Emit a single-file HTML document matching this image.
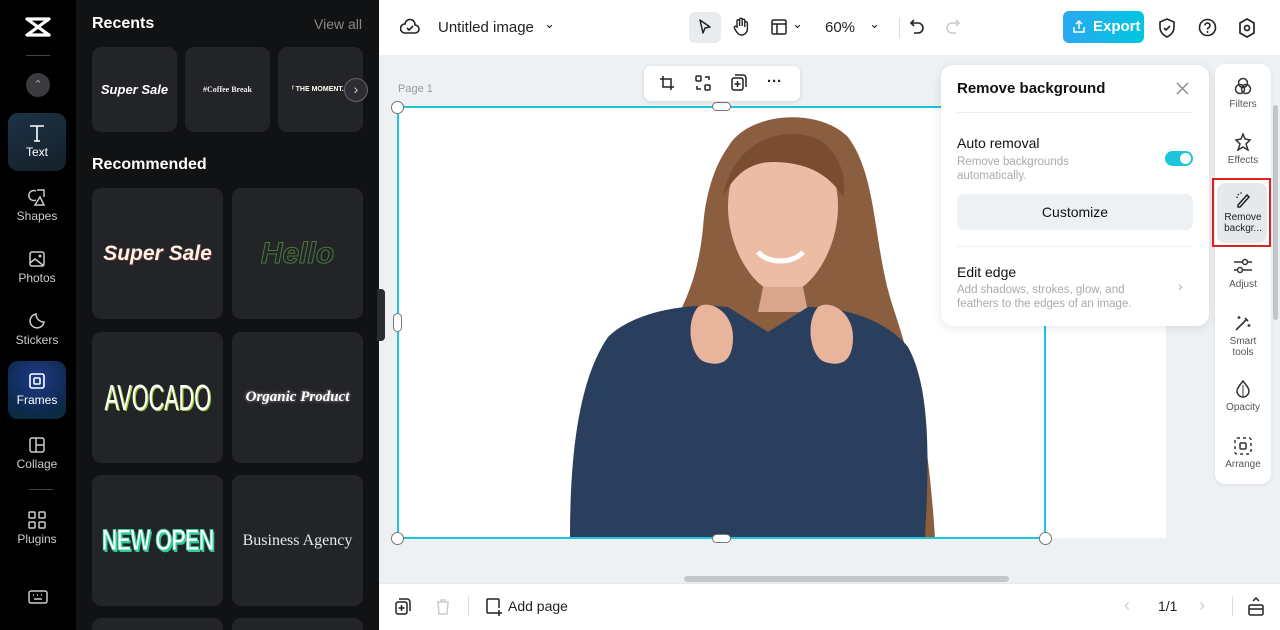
<!DOCTYPE html>
<html><head><meta charset="utf-8"><style>
*{box-sizing:border-box;margin:0;padding:0}
html,body{width:1280px;height:630px;overflow:hidden}
body{font-family:"Liberation Sans",sans-serif;background:#eef1f4;position:relative}
.rail{position:absolute;left:0;top:0;width:76px;height:630px;background:#000;color:#ddd}
.rail .it{position:absolute;left:8px;width:58px;height:58px;text-align:center;font-size:12px;color:#ccc}
.rail .it svg{display:block;margin:10px auto 2px}
.panel{position:absolute;left:76px;top:0;width:303px;height:630px;background:#111214;color:#fff;overflow:hidden}
.card{position:absolute;background:#232428;border-radius:9px;display:flex;align-items:center;justify-content:center;overflow:hidden;white-space:nowrap}
.card span{display:inline-block}
.top{position:absolute;left:379px;top:0;right:0;height:55px;background:#fff}
.bot{position:absolute;left:379px;top:583px;right:0;height:47px;background:#fff;border-top:1px solid #e6e8eb}
.t{position:absolute;white-space:nowrap}
.side{position:absolute;left:1215px;top:64px;width:56px;height:420px;background:#fff;border-radius:10px;box-shadow:0 1px 4px rgba(0,0,0,.08)}
.side .s{position:absolute;left:0;width:56px;text-align:center;font-size:10px;color:#555;line-height:11px}
.side svg{display:block;margin:0 auto 4px}
</style></head><body>
<div class="rail">
 <svg style="position:absolute;left:24px;top:16px" width="28" height="22" viewBox="0 0 28 22"><path d="M3 3h22L3 19h22M3 3l22 16" fill="none" stroke="#fff" stroke-width="3.2" stroke-linejoin="round" stroke-linecap="round"/></svg>
 <div style="position:absolute;left:26px;top:55px;width:24px;height:1px;background:#444"></div>
 <div style="position:absolute;left:26px;top:73px;width:24px;height:24px;border-radius:50%;background:#3a3b3f;color:#aaa;font-size:11px;text-align:center;line-height:24px">⌃</div>
 <div class="it" style="top:113px;background:linear-gradient(160deg,#1c3244,#15202b);border-radius:10px;color:#fff"><svg width="18" height="20" viewBox="0 0 18 20"><path d="M2 3h14M9 3v15M6 18h6" stroke="#fff" stroke-width="1.6" fill="none"/></svg>Text</div>
 <div class="it" style="top:177px"><svg width="20" height="20" viewBox="0 0 20 20"><path d="M9 4a5 5 0 1 0 0 9M10 3h7v7M13 10l-5 8h9z" stroke="#ccc" stroke-width="1.5" fill="none"/></svg>Shapes</div>
 <div class="it" style="top:239px"><svg width="20" height="20" viewBox="0 0 20 20"><rect x="3" y="3" width="14" height="14" rx="2" stroke="#ccc" stroke-width="1.5" fill="none"/><path d="M3 14l5-4 9 7" stroke="#ccc" stroke-width="1.5" fill="none"/><circle cx="13" cy="7" r="1.5" fill="#ccc"/></svg>Photos</div>
 <div class="it" style="top:301px"><svg width="20" height="20" viewBox="0 0 20 20"><path d="M17 11A7 7 0 1 1 9 3c0 4 3 8 8 8z" stroke="#ccc" stroke-width="1.5" fill="none"/></svg>Stickers</div>
 <div class="it" style="top:361px;height:58px;background:radial-gradient(circle at 50% 30%,#1f3a8a,#0c2a4a 70%,#06303a);border-radius:10px;color:#fff"><svg width="20" height="20" viewBox="0 0 20 20"><rect x="3" y="3" width="14" height="14" rx="2" stroke="#fff" stroke-width="1.6" fill="none"/><rect x="7" y="7" width="6" height="6" rx="1" stroke="#fff" stroke-width="1.6" fill="none"/></svg>Frames</div>
 <div class="it" style="top:425px"><svg width="20" height="20" viewBox="0 0 20 20"><rect x="3" y="3" width="14" height="14" rx="2" stroke="#ccc" stroke-width="1.5" fill="none"/><path d="M9 3v14M9 10h8" stroke="#ccc" stroke-width="1.5"/></svg>Collage</div>
 <div style="position:absolute;left:29px;top:489px;width:24px;height:1px;background:#444"></div>
 <div class="it" style="top:500px"><svg width="20" height="20" viewBox="0 0 20 20"><g stroke="#ccc" stroke-width="1.5" fill="none"><rect x="2" y="2" width="6" height="6" rx="1"/><rect x="12" y="2" width="6" height="6" rx="1"/><rect x="2" y="12" width="6" height="6" rx="1"/><rect x="12" y="12" width="6" height="6" rx="1"/></g></svg>Plugins</div>
 <svg style="position:absolute;left:28px;top:589px" width="20" height="16" viewBox="0 0 20 16"><rect x="1" y="2" width="18" height="12" rx="2" stroke="#ccc" stroke-width="1.5" fill="none"/><path d="M5 6h1M9 6h1M13 6h1M6 10h8" stroke="#ccc" stroke-width="1.5"/></svg>
</div>
<div class="panel">
 <div class="t" style="left:16px;top:15px;font-size:16px;font-weight:bold">Recents</div>
 <div class="t" style="left:238px;top:16px;font-size:14px;color:#888">View all</div>
 <div class="card" style="left:16px;top:47px;width:85px;height:85px"><span style="font-weight:bold;font-style:italic;font-size:13px;color:#fff">Super Sale</span></div>
 <div class="card" style="left:109px;top:47px;width:85px;height:85px"><span style="font-family:'Liberation Serif',serif;font-weight:bold;font-size:8px;color:#eee">#Coffee Break</span></div>
 <div class="card" style="left:202px;top:47px;width:85px;height:85px;justify-content:flex-start;padding-left:14px"><span style="font-weight:bold;font-size:7px;color:#ffe">ᶠ THE MOMENT.</span></div>
 <div style="position:absolute;left:268px;top:78px;width:24px;height:24px;border-radius:50%;background:#2d2e33;border:1px solid #666;color:#ccc;text-align:center;line-height:21px;font-size:14px">›</div>
 <div class="t" style="left:16px;top:156px;font-size:16px;font-weight:bold">Recommended</div>
 <div class="card" style="left:16px;top:188px;width:131px;height:131px"><span style="font-weight:bold;font-style:italic;font-size:21px;color:#fff3e6;text-shadow:1px 1px 0 #633">Super Sale</span></div>
 <div class="card" style="left:156px;top:188px;width:131px;height:131px"><span style="font-weight:bold;font-style:italic;font-size:30px;color:transparent;-webkit-text-stroke:1px #4a7a3a">Hello</span></div>
 <div class="card" style="left:16px;top:332px;width:131px;height:131px"><span style="font-size:36px;color:#fff;transform:scaleX(.6);text-shadow:2px 1px 0 #9c3">AVOCADO</span></div>
 <div class="card" style="left:156px;top:332px;width:131px;height:131px"><span style="font-family:'Liberation Serif',serif;font-weight:bold;font-style:italic;font-size:15px;color:#fff;text-shadow:0 0 3px #aaa">Organic Product</span></div>
 <div class="card" style="left:16px;top:475px;width:131px;height:131px"><span style="font-weight:bold;font-size:30px;color:#fff;transform:scaleX(.72);letter-spacing:-1px;-webkit-text-stroke:1px #3c9;text-shadow:2px 2px 0 #3c9">NEW OPEN</span></div>
 <div class="card" style="left:156px;top:475px;width:131px;height:131px"><span style="font-family:'Liberation Serif',serif;font-size:16px;color:#e6e8f0">Business Agency</span></div>
 <div class="card" style="left:16px;top:618px;width:131px;height:30px"></div>
 <div class="card" style="left:156px;top:618px;width:131px;height:30px"></div>
</div>
<div style="position:absolute;left:377px;top:289px;width:8px;height:52px;background:#2b2c30;border-radius:0 4px 4px 0"></div>
<div class="top">
 <svg style="position:absolute;left:21px;top:18px" width="20" height="18" viewBox="0 0 20 18"><path d="M5 15h10a4 4 0 0 0 0-8 5 5 0 0 0-10-1A4 4 0 0 0 5 15z" stroke="#222" stroke-width="1.6" fill="none"/><path d="M7 10l2 2 4-4" stroke="#222" stroke-width="1.6" fill="none"/></svg>
 <div class="t" style="left:59px;top:19px;font-size:15px;color:#222">Untitled image</div>
 <div class="t" style="left:165px;top:16px;font-size:13px;color:#222">⌄</div>
 <div style="position:absolute;left:310px;top:12px;width:32px;height:31px;background:#e9ecef;border-radius:6px"></div>
 <svg style="position:absolute;left:318px;top:18px" width="16" height="18" viewBox="0 0 16 18"><path d="M3 2l10 7-5 1-2 5z" stroke="#222" stroke-width="1.5" fill="none" stroke-linejoin="round"/></svg>
 <svg style="position:absolute;left:353px;top:17px" width="18" height="20" viewBox="0 0 18 20"><path d="M5 10V4a1.3 1.3 0 0 1 2.6 0v5V2.5a1.3 1.3 0 0 1 2.6 0V9V3.5a1.3 1.3 0 0 1 2.6 0V10V6a1.3 1.3 0 0 1 2.6 0v6a6 6 0 0 1-6 6c-3 0-4-2-6-5l-1-2a1.3 1.3 0 0 1 2-1.5z" stroke="#222" stroke-width="1.4" fill="none"/></svg>
 <svg style="position:absolute;left:392px;top:19px" width="16" height="16" viewBox="0 0 16 16"><rect x="1" y="1" width="14" height="14" rx="1.5" stroke="#222" stroke-width="1.5" fill="none"/><path d="M1 5h14M6 5v10" stroke="#222" stroke-width="1.5"/></svg>
 <div class="t" style="left:413px;top:16px;font-size:13px;color:#222">⌄</div>
 <div class="t" style="left:446px;top:19px;font-size:15px;color:#222">60%</div>
 <div class="t" style="left:490px;top:16px;font-size:13px;color:#222">⌄</div>
 <div style="position:absolute;left:520px;top:18px;width:1px;height:20px;background:#ddd"></div>
 <svg style="position:absolute;left:530px;top:18px" width="16" height="18" viewBox="0 0 16 18"><path d="M5 2L2 5l3 3M2 5h7a5 5 0 0 1 0 10H5" stroke="#222" stroke-width="1.6" fill="none"/></svg>
 <svg style="position:absolute;left:566px;top:18px" width="16" height="18" viewBox="0 0 16 18"><path d="M11 2l3 3-3 3M14 5H7a5 5 0 0 0 0 10h4" stroke="#ccc" stroke-width="1.6" fill="none"/></svg>
 <div style="position:absolute;left:684px;top:11px;width:81px;height:32px;border-radius:6px;background:linear-gradient(90deg,#2ba8f0,#00c7e0);color:#fff;font-size:15px;font-weight:bold;line-height:32px;padding-left:30px">Export</div>
 <svg style="position:absolute;left:693px;top:19px" width="14" height="15" viewBox="0 0 14 15"><path d="M7 10V2M4 5l3-3 3 3M2 8v5h10V8" stroke="#fff" stroke-width="1.5" fill="none"/></svg>
 <svg style="position:absolute;left:779px;top:18px" width="18" height="20" viewBox="0 0 18 20"><path d="M9 1l7 3v5c0 5-3 8-7 10-4-2-7-5-7-10V4z" stroke="#222" stroke-width="1.6" fill="none"/><path d="M6 10l2 2 4-4" stroke="#222" stroke-width="1.6" fill="none"/></svg>
 <svg style="position:absolute;left:819px;top:18px" width="19" height="19" viewBox="0 0 19 19"><circle cx="9.5" cy="9.5" r="8" stroke="#222" stroke-width="1.6" fill="none"/><path d="M7 7.5a2.5 2.5 0 1 1 3.5 2.3c-.8.4-1 1-1 1.7" stroke="#222" stroke-width="1.6" fill="none"/><circle cx="9.5" cy="14" r="1" fill="#222"/></svg>
 <svg style="position:absolute;left:859px;top:18px" width="18" height="20" viewBox="0 0 18 20"><path d="M9 1l7 4v10l-7 4-7-4V5z" stroke="#222" stroke-width="1.7" fill="none"/><circle cx="9" cy="10" r="2.5" stroke="#222" stroke-width="1.7" fill="none"/></svg>
</div>
<div class="t" style="left:398px;top:83px;font-size:11px;color:#999">Page 1</div>
<div style="position:absolute;left:398px;top:107px;width:768px;height:431px;background:#fff;overflow:hidden">
 <svg width="768" height="431" viewBox="0 0 768 431">
  <path d="M330 40c20-35 90-40 120-10 30 40 25 110 45 170 20 60 35 120 42 231H180c10-80 35-140 70-180 35-40 50-80 55-130 2-30 10-60 25-81z" fill="#8b5e40"/>
  <path d="M330 100c0-45 25-70 55-70s55 25 55 70c0 40-25 85-55 88-30-3-55-48-55-88z" fill="#ecbda4"/>
  <path d="M325 90c10-55 55-70 90-60 25 10 35 40 30 60-15-25-40-35-70-35-25 0-40 15-50 35z" fill="#7a4c30"/>
  <path d="M360 145c10 12 35 12 45 0" stroke="#fff" stroke-width="5" fill="none"/>
  <path d="M365 180h40l5 25h-50z" fill="#d9a58c"/>
  <path d="M210 230c25-25 80-35 120-30l40 25 40-25c40 0 80 15 100 40 25 45 20 130 17 191H172c0-90 10-160 38-201z" fill="#2a3e5e"/>
  <path d="M300 200c12-8 35 5 35 30s-12 30-28 25c-15-5-20-40-7-55zM420 200c12-8 35 5 35 30s-12 30-28 25c-15-5-20-40-7-55z" fill="#e8b49b"/>
 </svg>
</div>
<div style="position:absolute;left:397px;top:106px;width:649px;height:433px;border:2px solid #1ec4dc"></div>
<div style="position:absolute;left:391px;top:101px;width:13px;height:13px;border-radius:50%;background:#fff;border:1px solid #777"></div>
<div style="position:absolute;left:391px;top:532px;width:13px;height:13px;border-radius:50%;background:#fff;border:1px solid #777"></div>
<div style="position:absolute;left:1039px;top:532px;width:13px;height:13px;border-radius:50%;background:#fff;border:1px solid #777"></div>
<div style="position:absolute;left:712px;top:102px;width:19px;height:9px;border-radius:5px;background:#fff;border:1px solid #777"></div>
<div style="position:absolute;left:712px;top:534px;width:19px;height:9px;border-radius:5px;background:#fff;border:1px solid #777"></div>
<div style="position:absolute;left:393px;top:313px;width:9px;height:19px;border-radius:5px;background:#fff;border:1px solid #777"></div>
<div style="position:absolute;left:644px;top:66px;width:156px;height:35px;background:#fff;border-radius:7px;box-shadow:0 1px 5px rgba(0,0,0,.12)"></div>
<svg style="position:absolute;left:659px;top:75px" width="16" height="16" viewBox="0 0 16 16"><path d="M4 1v11h11M1 4h11v11" stroke="#222" stroke-width="1.5" fill="none"/></svg>
<svg style="position:absolute;left:695px;top:75px" width="16" height="16" viewBox="0 0 16 16"><g stroke="#222" stroke-width="1.5" fill="none"><rect x="1" y="1" width="5" height="5" rx="1"/><rect x="10" y="10" width="5" height="5" rx="1"/><path d="M10 2h4v3M6 14H2v-3"/></g></svg>
<svg style="position:absolute;left:731px;top:74px" width="16" height="18" viewBox="0 0 16 18"><rect x="1" y="4" width="11" height="12" rx="2" stroke="#222" stroke-width="1.5" fill="none"/><path d="M4 1h8a3 3 0 0 1 3 3v9M6.5 7v6M3.5 10h6" stroke="#222" stroke-width="1.5" fill="none"/></svg>
<div class="t" style="left:767px;top:73px;font-size:15px;color:#222;font-weight:bold">···</div>
<div style="position:absolute;left:684px;top:576px;width:325px;height:6px;border-radius:3px;background:#c4c7ca"></div>
<div style="position:absolute;left:1273px;top:105px;width:5px;height:215px;border-radius:3px;background:#c4c7ca"></div>
<div style="position:absolute;left:941px;top:65px;width:268px;height:261px;background:#fff;border-radius:12px;box-shadow:0 2px 10px rgba(0,0,0,.1)">
 <div class="t" style="left:16px;top:15px;font-size:15px;font-weight:bold;color:#111">Remove background</div>
 <svg style="position:absolute;left:235px;top:17px" width="13" height="13" viewBox="0 0 13 13"><path d="M1 1l11 11M12 1L1 12" stroke="#888" stroke-width="1.4"/></svg>
 <div style="position:absolute;left:16px;top:47px;width:236px;height:1px;background:#eee"></div>
 <div class="t" style="left:16px;top:70px;font-size:14px;color:#111">Auto removal</div>
 <div class="t" style="left:16px;top:90px;font-size:11.5px;color:#aaa;line-height:14px">Remove backgrounds<br>automatically.</div>
 <div style="position:absolute;left:224px;top:86px;width:28px;height:15px;border-radius:8px;background:#1ec4dc"><div style="position:absolute;right:2px;top:2px;width:11px;height:11px;border-radius:50%;background:#fff"></div></div>
 <div style="position:absolute;left:16px;top:129px;width:236px;height:36px;border-radius:7px;background:#eef1f4;text-align:center;line-height:36px;font-size:14px;color:#111">Customize</div>
 <div style="position:absolute;left:16px;top:181px;width:236px;height:1px;background:#eee"></div>
 <div class="t" style="left:16px;top:199px;font-size:14px;color:#111">Edit edge</div>
 <div class="t" style="left:16px;top:218px;font-size:11.5px;color:#aaa;line-height:14px">Add shadows, strokes, glow, and<br>feathers to the edges of an image.</div>
 <div class="t" style="left:237px;top:213px;font-size:14px;color:#aaa">›</div>
</div>
<div class="side">
 <div class="s" style="top:13px"><svg width="18" height="18" viewBox="0 0 18 18"><g stroke="#333" stroke-width="1.5" fill="none"><circle cx="9" cy="6" r="4.5"/><circle cx="6" cy="12" r="4.5"/><circle cx="12" cy="12" r="4.5"/></g></svg>Filters</div>
 <div class="s" style="top:69px"><svg width="18" height="18" viewBox="0 0 18 18"><path d="M9 1l2 5 5 1-4 4 2 6-5-3-5 3 2-6-4-4 5-1z" stroke="#333" stroke-width="1.5" fill="none"/></svg>Effects</div>
 <div style="position:absolute;left:-3px;top:114px;width:59px;height:69px;border:2px solid #e02020"></div>
 <div style="position:absolute;left:2px;top:119px;width:50px;height:60px;border-radius:8px;background:#e6e9ec"></div>
 <div class="s" style="top:126px;color:#222"><svg width="18" height="18" viewBox="0 0 18 18"><path d="M4 15l9-10 2 2-9 10H4z" stroke="#222" stroke-width="1.5" fill="none"/><path d="M3 8a5 5 0 0 1 5-5" stroke="#222" stroke-width="1.3" stroke-dasharray="1.5 1.5" fill="none"/></svg>Remove<br>backgr...</div>
 <div class="s" style="top:193px"><svg width="20" height="18" viewBox="0 0 20 18"><g stroke="#333" stroke-width="1.5" fill="none"><path d="M1 5h18M1 13h18"/><circle cx="12" cy="5" r="2.5" fill="#fff"/><circle cx="7" cy="13" r="2.5" fill="#fff"/></g></svg>Adjust</div>
 <div class="s" style="top:250px"><svg width="18" height="18" viewBox="0 0 18 18"><path d="M2 16L12 6M11 4l3 3" stroke="#333" stroke-width="1.6" fill="none"/><path d="M5 2v3M3.5 3.5h3M15 10v3M13.5 11.5h3" stroke="#333" stroke-width="1.3"/></svg>Smart<br>tools</div>
 <div class="s" style="top:316px"><svg width="18" height="18" viewBox="0 0 18 18"><path d="M9 1c3 4 6 7 6 10a6 6 0 0 1-12 0c0-3 3-6 6-10z" stroke="#333" stroke-width="1.5" fill="none"/><path d="M9 5v11" stroke="#333" stroke-width="1"/></svg>Opacity</div>
 <div class="s" style="top:373px"><svg width="18" height="18" viewBox="0 0 18 18"><rect x="1" y="1" width="16" height="16" rx="2" stroke="#333" stroke-width="1.5" stroke-dasharray="3 3" fill="none"/><rect x="6" y="6" width="6" height="6" rx="1" stroke="#333" stroke-width="1.5" fill="none"/></svg>Arrange</div>
</div>
<div class="bot">
 <svg style="position:absolute;left:16px;top:14px" width="16" height="18" viewBox="0 0 16 18"><rect x="1" y="4" width="11" height="12" rx="2" stroke="#222" stroke-width="1.5" fill="none"/><path d="M4 1h8a3 3 0 0 1 3 3v9M6.5 7v6M3.5 10h6" stroke="#222" stroke-width="1.5" fill="none"/></svg>
 <svg style="position:absolute;left:56px;top:14px" width="16" height="18" viewBox="0 0 16 18"><path d="M2 4h12M6 4V2h4v2M3 4l1 12h8l1-12" stroke="#ccc" stroke-width="1.5" fill="none"/></svg>
 <div style="position:absolute;left:89px;top:12px;width:1px;height:20px;background:#ddd"></div>
 <svg style="position:absolute;left:106px;top:14px" width="18" height="18" viewBox="0 0 18 18"><path d="M11 15H3a1 1 0 0 1-1-1V2a1 1 0 0 1 1-1h10a1 1 0 0 1 1 1v8M14 12v6M11 15h6" stroke="#222" stroke-width="1.5" fill="none"/></svg>
 <div class="t" style="left:129px;top:14px;font-size:14px;color:#222">Add page</div>
 <div class="t" style="left:745px;top:11px;font-size:18px;color:#ccc">‹</div>
 <div class="t" style="left:779px;top:14px;font-size:14px;color:#222">1/1</div>
 <div class="t" style="left:820px;top:11px;font-size:18px;color:#ccc">›</div>
 <div style="position:absolute;left:853px;top:12px;width:1px;height:20px;background:#ddd"></div>
 <svg style="position:absolute;left:868px;top:13px" width="18" height="19" viewBox="0 0 18 19"><rect x="2" y="8" width="14" height="10" rx="1.5" stroke="#222" stroke-width="1.5" fill="none"/><path d="M2 12h14M6 4l3-3 3 3" stroke="#222" stroke-width="1.5" fill="none"/></svg>
</div>
</body></html>
